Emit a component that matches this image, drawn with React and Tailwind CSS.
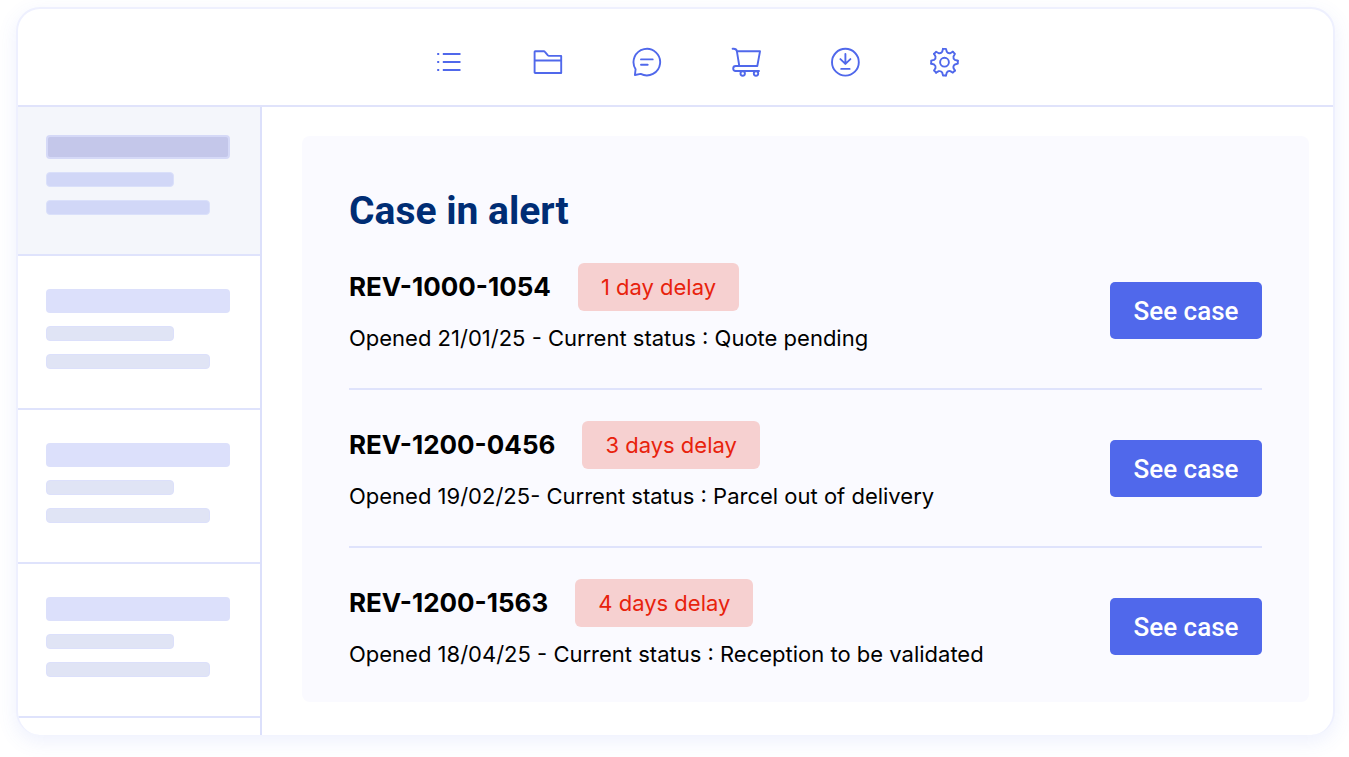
const iconPaths = {
  List: (
    <path d="M4.2 8h2M4.2 16h2M4.2 24h2M9.800 8H27.500M9.800 16H27.500M9.800 24H27.500" strokeLinecap="butt" />
  ),
  Files: (
    <path d="M3.2 5.2h8.6c.5 0 .8.2 1.1.6l3 3.6c.3.3.6.5 1 .5H29.2V27H3.2a.6.6 0 0 1-.6-.6V5.8a.6.6 0 0 1 .6-.6ZM2.6 14.5H29.2" />
  ),
  Messages: (
    <path d="M4.6 23.2A13.3 13.3 0 1 1 9.7 27.9L3.9 29ZM10 13.4h11.7M10 18.7h6.7" />
  ),
  Orders: (
    <>
      <path d="M2.6 2.8h1c1.8 0 3 .9 3.3 2.5H30L27.3 20H9.3L6.9 5.3M9.3 20H5.7a2.5 2.5 0 0 0 0 5H29" />
      <circle cx="12.7" cy="27.5" r="2.2" />
      <circle cx="26" cy="27.5" r="2.2" />
    </>
  ),
  Downloads: (
    <>
      <circle cx="16.4" cy="16.2" r="13.4" />
      <path d="M16.4 8v9.9M11.4 13.1l5 4.8 5-4.8M12.2 22.9h8.4" />
    </>
  ),
  Settings: (
    <>
      <circle cx="16.5" cy="16.2" r="4.4" />
      {[0, 45, 90, 135, 180, 225, 270, 315].map((angle) => (
        <path
          key={angle}
          transform={`translate(.2 .2) rotate(${angle} 16.3 16)`}
          d="M14.8 2.7H17.8L18.6 5.6Q19.8 7.5 22.03 7.02L24.7 5.5"
        />
      ))}
    </>
  ),
};

const cases = [
  { id: "REV-1000-1054", delay: "1 day delay", detail: "Opened 21/01/25 - Current status : Quote pending" },
  { id: "REV-1200-0456", delay: "3 days delay", detail: "Opened 19/02/25- Current status : Parcel out of delivery" },
  { id: "REV-1200-1563", delay: "4 days delay", detail: "Opened 18/04/25 - Current status : Reception to be validated" },
];

function Toolbar() {
  return (
    <header className="flex h-[98px] items-center justify-center border-b-2 border-[#e0e3fb] pt-[10px] pl-[42px]">
      <nav aria-label="Main" className="flex gap-[67px]">
        {Object.entries(iconPaths).map(([name, drawing]) => (
          <button key={name} type="button" aria-label={name} className="size-8 text-[#5068eb]">
            <svg
              viewBox="0 0 32 32"
              className="size-8"
              fill="none"
              stroke="currentColor"
              strokeWidth="1.9"
              strokeLinecap="round"
              strokeLinejoin="round"
            >
              {drawing}
            </svg>
          </button>
        ))}
      </nav>
    </header>
  );
}

function ListItem() {
  return (
    <li className="h-[154px] border-b-2 border-[#dfe3fc] px-7 pt-[33px]">
      <div className="h-6 w-46 rounded bg-[#dce0fb]" />
      <div className="mt-[13px] h-[15px] w-32 rounded border border-[#dce0fb] bg-[#e0e4f5]" />
      <div className="mt-[13px] h-[15px] w-41 rounded border border-[#dce0fb] bg-[#e0e4f5]" />
    </li>
  );
}

function Sidebar() {
  return (
    <aside className="w-[244px] shrink-0 border-r-2 border-[#dce0fb]">
      <ul>
        <li className="h-[149px] border-b-2 border-[#dfe3fc] bg-[#f4f6fb] px-7 pt-7">
          <div className="h-6 w-46 rounded border-2 border-[#d5d9f7] bg-[#c4c7ea]" />
          <div className="mt-[13px] h-[15px] w-32 rounded border border-[#dae0fa] bg-[#d1d7f7]" />
          <div className="mt-[13px] h-[15px] w-41 rounded border border-[#dae0fa] bg-[#d1d7f7]" />
        </li>
        <ListItem />
        <ListItem />
        <ListItem />
      </ul>
    </aside>
  );
}

function CaseRow({ id, delay, detail }) {
  return (
    <li className="flex items-center justify-between border-b-2 border-[#dfe3fc] pt-[31px] pb-[31px] first:pt-0 last:border-b-0 last:pb-0">
      <div>
        <div className="flex items-center gap-[27px]">
          <h2 className="text-[26px] leading-[48px] font-bold">{id}</h2>
          <span className="rounded-md bg-[#f6d0d0] px-[23px] text-[22px] leading-[48px] text-[#e8220c]">{delay}</span>
        </div>
        <p className="mt-2 text-[22px] leading-[38px]">{detail}</p>
      </div>
      <button
        type="button"
        className="h-[57px] w-38 shrink-0 rounded-[5px] bg-[#5068eb] pt-0.5 font-[Roboto,sans-serif] text-[26px] font-medium text-white"
      >
        See case
      </button>
    </li>
  );
}

export default function App() {
  return (
    <div className="bg-white pt-[7px] pr-[14px] pb-[22px] pl-4 font-[Inter,sans-serif] text-black">
      <div className="overflow-hidden rounded-3xl border-2 border-b-0 border-[#eef0fe] bg-white shadow-[0_6px_20px_rgba(80,104,235,0.1)]">
        <Toolbar />
        <div className="flex">
          <Sidebar />
          <main className="mt-[29px] mr-6 mb-[33px] ml-10 flex-1 rounded-lg bg-[#fafaff] px-[47px] pt-[51px] pb-[29px]">
            <h1 className="font-[Roboto,sans-serif] text-[39px] leading-[48px] font-bold text-[#002d74]">Case in alert</h1>
            <ul className="mt-7">
              {cases.map((item) => (
                <CaseRow key={item.id} {...item} />
              ))}
            </ul>
          </main>
        </div>
      </div>
    </div>
  );
}
